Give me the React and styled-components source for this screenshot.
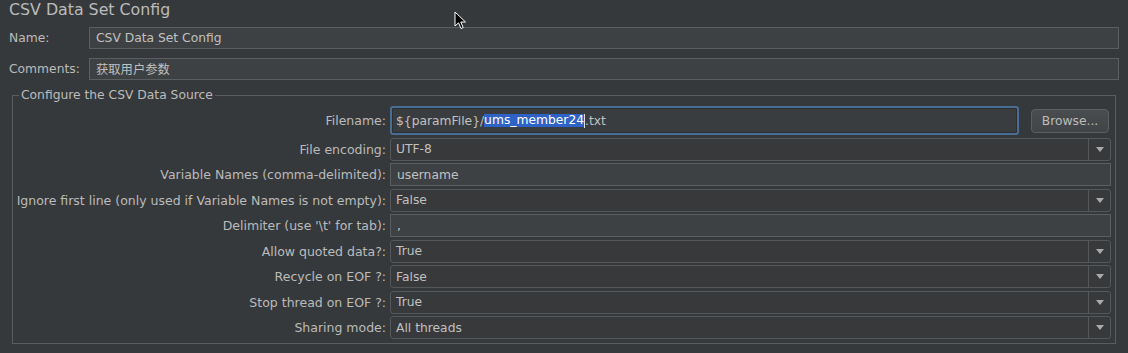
import React from "react";
import styled, { createGlobalStyle } from "styled-components";

const GlobalStyle = createGlobalStyle`
  body {
    margin: 0;
    background: #36393b;
    font-family: "DejaVu Sans", "Noto Sans CJK SC", sans-serif;
    color: #bbbbbb;
  }
`;

const Page = styled.div`
  position: relative;
  width: 1128px;
  height: 353px;
  padding: 0 9px;
  box-sizing: border-box;
  overflow: hidden;
`;

const Title = styled.div`
  font-size: 15.8px;
  height: 22px;
  line-height: 22px;
  margin-top: -1px;
`;

const TopRow = styled.div`
  display: grid;
  grid-template-columns: 80px 1fr;
  align-items: center;
  height: 22px;
  margin-top: ${(p) => p.$gap}px;
  font-size: 12.3px;
`;

const TextField = styled.div`
  height: ${(p) => p.$h || 22}px;
  box-sizing: border-box;
  display: flex;
  align-items: center;
  padding-left: 6px;
  background: #3e4143;
  border: 1px solid #5b5e60;
  font-size: 12.3px;
  color: #c0c0c0;
  white-space: nowrap;
`;

const Group = styled.fieldset`
  margin: 8px 3px 0 3px;
  padding: 3px 4px 4px 3px;
  border: 1px solid #5a5d5f;
  min-width: 0;
`;

const Legend = styled.legend`
  font-size: 12.3px;
  padding: 0 2px;
  margin-left: 3px;
  line-height: 15px;
`;

const Form = styled.div`
  display: grid;
  grid-template-columns: 370px 1fr;
  grid-auto-rows: 23px;
  grid-template-rows: 29px;
  column-gap: 4px;
  row-gap: 2.5px;
  align-items: center;
`;

const Label = styled.div`
  display: flex;
  justify-content: flex-end;
  white-space: nowrap;
  font-size: 12.5px;
  color: #bbbbbb;
`;

const FileRow = styled.div`
  display: flex;
  align-items: center;
  gap: 12px;
  padding-right: 2px;
  height: 29px;
`;

const FocusField = styled.div`
  flex: 1;
  height: 29px;
  box-sizing: border-box;
  display: flex;
  align-items: center;
  padding-left: 4px;
  border: 2px solid #4a6d94;
  border-radius: 3px;
  box-shadow: inset 0 0 0 1px #2c2f31;
  background: #3a3d3f;
  font-size: 12.3px;
  color: #c0c0c0;
  white-space: nowrap;
`;

const Selected = styled.span`
  display: inline-block;
  background: #2f62c6;
  color: #ffffff;
  line-height: 13px;
  height: 13px;
`;

const Caret = styled.span`
  display: inline-block;
  width: 1px;
  height: 14px;
  background: #e0e0e0;
`;

const Button = styled.div`
  width: 78px;
  height: 24px;
  box-sizing: border-box;
  display: flex;
  align-items: center;
  justify-content: center;
  border: 1px solid #5c5f61;
  border-radius: 4px;
  background: linear-gradient(#4a4d4f, #424547);
  font-size: 12.3px;
  color: #bbbbbb;
`;

const Combo = styled.div`
  height: 23px;
  box-sizing: border-box;
  display: flex;
  border: 1px solid #55585a;
  border-radius: 3px;
  background: #37393b;
  font-size: 12.3px;
  color: #c0c0c0;
`;

const ComboValue = styled.div`
  flex: 1;
  display: flex;
  align-items: center;
  padding-left: 5px;
`;

const ArrowBox = styled.div`
  width: 21px;
  border-left: 1px solid #55585a;
  display: flex;
  align-items: center;
  justify-content: center;

  &::after {
    content: "";
    border-left: 4px solid transparent;
    border-right: 4px solid transparent;
    border-top: 5px solid #a9abad;
  }
`;

const Pointer = styled.svg`
  position: absolute;
  left: 454px;
  top: 11px;
`;

const rows = [
  { label: "File encoding:", value: "UTF-8", combo: true },
  { label: "Variable Names (comma-delimited):", value: "username" },
  { label: "Ignore first line (only used if Variable Names is not empty):", value: "False", combo: true },
  { label: "Delimiter (use '\\t' for tab):", value: "," },
  { label: "Allow quoted data?:", value: "True", combo: true },
  { label: "Recycle on EOF ?:", value: "False", combo: true },
  { label: "Stop thread on EOF ?:", value: "True", combo: true },
  { label: "Sharing mode:", value: "All threads", combo: true },
];

export default function App() {
  return (
    <Page>
      <GlobalStyle />
      <Title>CSV Data Set Config</Title>
      <TopRow $gap={6}>
        <span>Name:</span>
        <TextField>CSV Data Set Config</TextField>
      </TopRow>
      <TopRow $gap={9}>
        <span>Comments:</span>
        <TextField>获取用户参数</TextField>
      </TopRow>

      <Group>
        <Legend>Configure the CSV Data Source</Legend>
        <Form>
          <Label>Filename:</Label>
          <FileRow>
            <FocusField>
              {"${paramFile}/"}
              <Selected>ums_member24</Selected>
              <Caret />
              .txt
            </FocusField>
            <Button>Browse...</Button>
          </FileRow>
          {rows.map((r) => (
            <React.Fragment key={r.label}>
              <Label>{r.label}</Label>
              {r.combo ? (
                <Combo>
                  <ComboValue>{r.value}</ComboValue>
                  <ArrowBox />
                </Combo>
              ) : (
                <TextField $h={23}>{r.value}</TextField>
              )}
            </React.Fragment>
          ))}
        </Form>
      </Group>

      <Pointer width="13" height="19" viewBox="0 0 13 19">
        <path
          d="M1 1 L1 15 L4.5 11.8 L7 17.5 L9.2 16.6 L6.8 11 L11.5 11 Z"
          fill="#000"
          stroke="#fff"
          strokeWidth="1"
          strokeLinejoin="round"
        />
      </Pointer>
    </Page>
  );
}
